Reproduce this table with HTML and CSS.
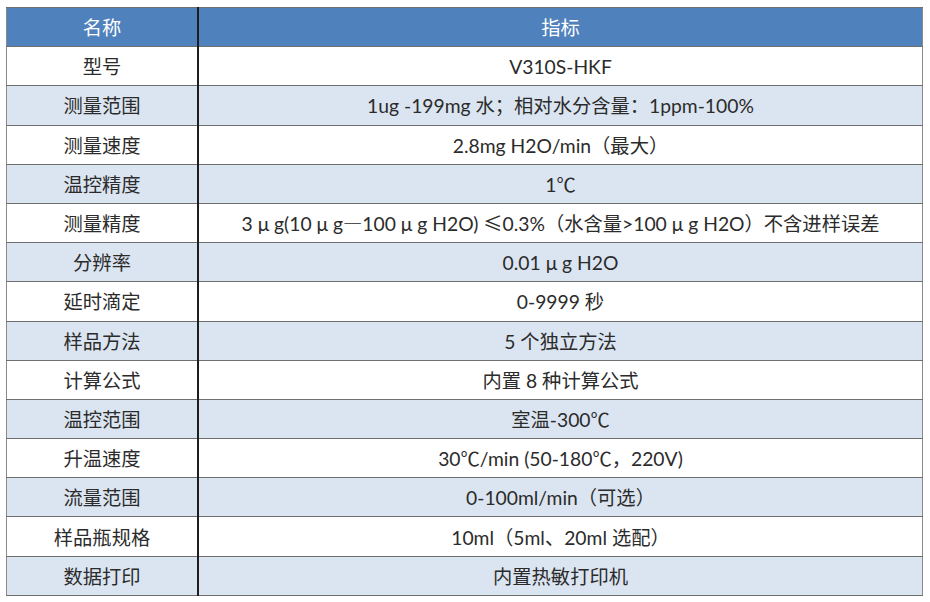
FILE: index.html
```html
<!DOCTYPE html>
<html lang="zh-CN">
<head>
<meta charset="utf-8">
<title>技术指标</title>
<link rel="stylesheet" href="styles.css">
</head>
<body>
<table class="spec">
  <thead>
    <tr><th class="name">名称</th><th class="val">指标</th></tr>
  </thead>
  <tbody>
    <tr><td class="name">型号</td><td class="val">V310S-HKF</td></tr>
    <tr class="alt"><td class="name">测量范围</td><td class="val">1ug -199mg 水；相对水分含量：1ppm-100%</td></tr>
    <tr><td class="name">测量速度</td><td class="val">2.8mg H2O/min（最大）</td></tr>
    <tr class="alt"><td class="name">温控精度</td><td class="val">1<span class="cjk">℃</span></td></tr>
    <tr><td class="name">测量精度</td><td class="val">3 μ g(10 μ g<span class="cjk">—</span>100 μ g H2O) <span class="cjk">≤</span>0.3%（水含量&gt;100 μ g H2O）不含进样误差</td></tr>
    <tr class="alt"><td class="name">分辨率</td><td class="val">0.01 μ g H2O</td></tr>
    <tr><td class="name">延时滴定</td><td class="val">0-9999 秒</td></tr>
    <tr class="alt"><td class="name">样品方法</td><td class="val">5 个独立方法</td></tr>
    <tr><td class="name">计算公式</td><td class="val">内置 8 种计算公式</td></tr>
    <tr class="alt"><td class="name">温控范围</td><td class="val">室温-300<span class="cjk">℃</span></td></tr>
    <tr><td class="name">升温速度</td><td class="val">30<span class="cjk">℃</span>/min (50-180<span class="cjk">℃</span>，220V)</td></tr>
    <tr class="alt"><td class="name">流量范围</td><td class="val">0-100ml/min（可选）</td></tr>
    <tr><td class="name">样品瓶规格</td><td class="val">10ml（5ml、20ml 选配）</td></tr>
    <tr class="alt"><td class="name">数据打印</td><td class="val">内置热敏打印机</td></tr>
  </tbody>
</table>
</body>
</html>
```
FILE: styles.css
```css
html, body {
  margin: 0;
  padding: 0;
  background: #ffffff;
}
body {
  padding: 7px 7px 0 6px;
  font-family: "Lato", "Noto Sans CJK SC", sans-serif;
  font-size: 19.3px;
  color: #2b2b2b;
}
.cjk {
  font-family: "Noto Sans CJK SC", sans-serif;
}
.spec {
  border-collapse: collapse;
  width: 917px;
  table-layout: fixed;
  border: 1.5px solid #8a8a8a;
}
.spec tr {
  height: 39.2px;
}
.spec th,
.spec td {
  padding: 0;
  text-align: center;
  vertical-align: middle;
  border-top: 1.5px solid #6f6f6f;
  border-bottom: 1.5px solid #6f6f6f;
  white-space: nowrap;
}
.spec .name {
  width: 190px;
  border-right: 2px solid #1e1e1e;
}
.spec thead th {
  background: #4f81bd;
  color: #ffffff;
  font-weight: 400;
}
.spec tbody tr {
  background: #ffffff;
}
.spec tbody tr.alt {
  background: #dbe5f1;
}
```
